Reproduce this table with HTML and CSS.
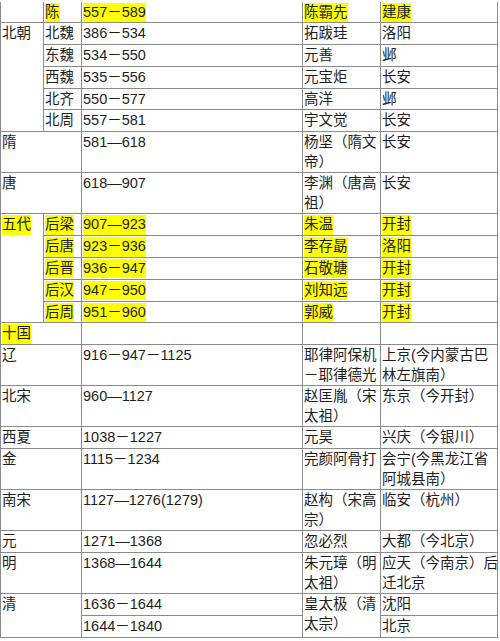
FILE: index.html
```html
<!DOCTYPE html>
<html lang="zh-CN">
<head>
<meta charset="utf-8">
<title>中国历代王朝表</title>
<link rel="stylesheet" href="styles.css">
</head>
<body>
<table class="chrono">
  <colgroup>
    <col class="c-era">
    <col class="c-sub">
    <col class="c-years">
    <col class="c-founder">
    <col class="c-capital">
  </colgroup>
  <tbody>
    <tr class="first">
      <td></td>
      <td><span class="hl">陈</span></td>
      <td><span class="hl">557－589</span></td>
      <td><span class="hl">陈霸先</span></td>
      <td><span class="hl">建康</span></td>
    </tr>
    <tr>
      <td rowspan="5">北朝</td>
      <td>北魏</td><td>386－534</td><td>拓跋珪</td><td>洛阳</td>
    </tr>
    <tr><td>东魏</td><td>534－550</td><td>元善</td><td>邺</td></tr>
    <tr><td>西魏</td><td>535－556</td><td>元宝炬</td><td>长安</td></tr>
    <tr><td>北齐</td><td>550－577</td><td>高洋</td><td>邺</td></tr>
    <tr><td>北周</td><td>557－581</td><td>宇文觉</td><td>长安</td></tr>
    <tr><td colspan="2">隋</td><td>581—618</td><td>杨坚（隋文<br>帝）</td><td>长安</td></tr>
    <tr><td colspan="2">唐</td><td>618—907</td><td>李渊（唐高<br>祖）</td><td>长安</td></tr>
    <tr>
      <td rowspan="5"><span class="hl">五代</span></td>
      <td><span class="hl">后梁</span></td><td><span class="hl">907—923</span></td><td><span class="hl">朱温</span></td><td><span class="hl">开封</span></td>
    </tr>
    <tr><td><span class="hl">后唐</span></td><td><span class="hl">923－936</span></td><td><span class="hl">李存勗</span></td><td><span class="hl">洛阳</span></td></tr>
    <tr><td><span class="hl">后晋</span></td><td><span class="hl">936－947</span></td><td><span class="hl">石敬瑭</span></td><td><span class="hl">开封</span></td></tr>
    <tr><td><span class="hl">后汉</span></td><td><span class="hl">947－950</span></td><td><span class="hl">刘知远</span></td><td><span class="hl">开封</span></td></tr>
    <tr><td><span class="hl">后周</span></td><td><span class="hl">951－960</span></td><td><span class="hl">郭威</span></td><td><span class="hl">开封</span></td></tr>
    <tr><td colspan="2"><span class="hl">十国</span></td><td></td><td></td><td></td></tr>
    <tr><td colspan="2">辽</td><td>916－947－1125</td><td>耶律阿保机<br>－耶律德光</td><td>上京(今内蒙古巴<br>林左旗南）</td></tr>
    <tr><td colspan="2">北宋</td><td>960—1127</td><td>赵匡胤（宋<br>太祖）</td><td>东京（今开封）</td></tr>
    <tr><td colspan="2">西夏</td><td>1038－1227</td><td>元昊</td><td>兴庆（今银川）</td></tr>
    <tr><td colspan="2">金</td><td>1115－1234</td><td>完颜阿骨打</td><td>会宁(今黑龙江省<br>阿城县南）</td></tr>
    <tr><td colspan="2">南宋</td><td>1127—1276(1279)</td><td>赵构（宋高<br>宗）</td><td>临安（杭州）</td></tr>
    <tr><td colspan="2">元</td><td>1271—1368</td><td>忽必烈</td><td>大都（今北京）</td></tr>
    <tr><td colspan="2">明</td><td>1368—1644</td><td>朱元璋（明<br>太祖）</td><td>应天（今南京）后<br>迁北京</td></tr>
    <tr><td colspan="2" rowspan="2">清</td><td>1636－1644</td><td rowspan="2">皇太极（清<br>太宗）</td><td>沈阳</td></tr>
    <tr><td>1644－1840</td><td>北京</td></tr>
  </tbody>
</table>
</body>
</html>
```
FILE: styles.css
```css
html, body {
  margin: 0;
  padding: 0;
  background: #ffffff;
}

.chrono {
  border-collapse: collapse;
  table-layout: fixed;
  width: 497px;
  margin-top: 1.5px;
  font-family: "Liberation Sans", "Noto Sans CJK SC", sans-serif;
  font-size: 14.5px;
  line-height: 19.3px;
  color: #1e1e1e;
}

.c-era { width: 43px; }
.c-sub { width: 38px; }
.c-years { width: 221px; }
.c-founder { width: 78px; }
.c-capital { width: 117px; }

.chrono td {
  border: 1px solid #8a8a8a;
  padding: 1px 0 0.5px 1px;
  vertical-align: top;
  white-space: nowrap;
  overflow: visible;
}

.chrono .first td {
  border-top-style: hidden;
}

.hl {
  display: inline-block;
  background: #ffff00;
  vertical-align: top;
}
```
